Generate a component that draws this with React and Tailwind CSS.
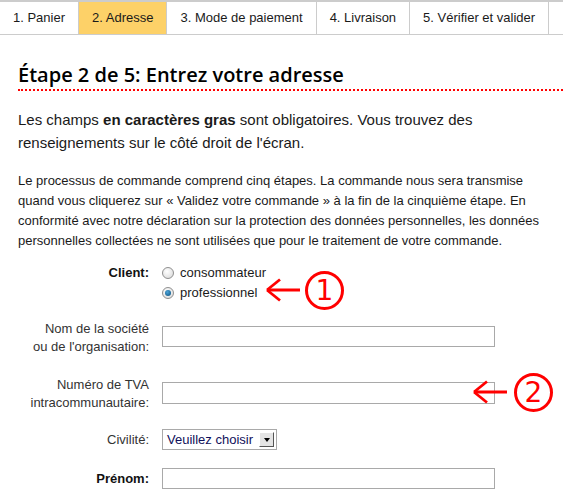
import React from "react";

const tabs = [
    { label: "1. Panier" },
    { label: "2. Adresse", active: true },
    { label: "3. Mode de paiement" },
    { label: "4. Livraison" },
    { label: "5. Vérifier et valider" },
];

const Radio = ({ checked, label }) => (
    <div className="flex items-center h-[20px]">
        <span className="w-[12px] h-[12px] rounded-full border border-[#8f8f8f] bg-[radial-gradient(circle_at_40%_35%,#ffffff,#d6d6d6)] flex items-center justify-center">
            {checked && (
                <span className="w-[6px] h-[6px] rounded-full bg-[radial-gradient(circle_at_40%_35%,#4aa3d8,#0b4f7c)]" />
            )}
        </span>
        <span className="ml-[6px]">{label}</span>
    </div>
);

const Arrow = ({ className }) => (
    <svg
        width="36"
        height="30"
        viewBox="0 0 36 30"
        className={className}
        fill="none"
        stroke="#ff0000"
        strokeWidth="2.8"
    >
        <path d="M2 15 H35" />
        <path d="M2 15 L15 4.5" />
        <path d="M2 15 L15 25.5" />
    </svg>
);

const Circled = ({ n, className }) => (
    <span
        className={
            "absolute w-[39px] h-[39px] rounded-full border-[3px] border-[#ff0000] flex items-center justify-center text-[#ff0000] text-[28px] leading-none font-['DejaVu_Sans',sans-serif] " +
            className
        }
    >
        {n}
    </span>
);

const Row = ({ label, bold, children, className = "" }) => (
    <div className={"flex gap-[13px] " + className}>
        <div
            className={
                "w-[131px] shrink-0 text-right " +
                (bold ? "font-bold text-[#111]" : "text-[#333]")
            }
        >
            {label}
        </div>
        {children}
    </div>
);

export default function App() {
    return (
        <div className="relative w-[563px] h-[495px] overflow-hidden bg-white font-['Liberation_Sans',Arial,sans-serif] text-[13px] text-[#1a1a1a]">
            <nav className="flex h-[35px] border-t-2 border-b border-[#cccccc]">
                {tabs.map((t) => (
                    <div
                        key={t.label}
                        className={
                            "flex items-center px-[13px] border-r border-[#cccccc] " +
                            (t.active ? "bg-[#fdd168]" : "")
                        }
                    >
                        {t.label}
                    </div>
                ))}
            </nav>

            <div className="px-[18px]">
                <h1 className="mt-[28px] pb-[2px] border-b-2 border-dotted border-[#ff0000] mr-[-18px] text-[20px] leading-[24px] font-semibold text-black font-['Open_Sans',sans-serif]">
                    Étape 2 de 5: Entrez votre adresse
                </h1>

                <p className="mt-[17px] text-[15px] leading-[23px]">
                    Les champs <b>en caractères gras</b> sont obligatoires.
                    Vous trouvez des renseignements sur le côté droit de
                    l'écran.
                </p>

                <p className="mt-[17px] leading-[20px]">
                    Le processus de commande comprend cinq étapes. La commande
                    nous sera transmise quand vous cliquerez sur « Validez
                    votre commande » à la fin de la cinquième étape. En
                    conformité avec notre déclaration sur la protection des
                    données personnelles, les données personnelles collectées
                    ne sont utilisées que pour le traitement de votre
                    commande.
                </p>

                <Row label="Client:" bold className="mt-[12px] leading-[20px]">
                    <div>
                        <Radio label="consommateur" />
                        <Radio label="professionnel" checked />
                    </div>
                </Row>

                <Row label={<>Nom de la société<br />ou de l'organisation:</>} className="mt-[17px] leading-[18px]">
                    <div className="mt-[6px] w-[333px] h-[21px] border border-[#a9a9a9]" />
                </Row>

                <Row label={<>Numéro de TVA<br />intracommunautaire:</>} className="mt-[20px] leading-[18px]">
                    <div className="mt-[6px] w-[333px] h-[22px] border border-[#a9a9a9]" />
                </Row>

                <Row label="Civilité:" className="mt-[17px] leading-[21px]">
                    <div className="flex items-center w-[115px] h-[21px] border border-[#a9a9a9] pl-[4px] pr-[2px]">
                        <span className="flex-1 text-[#10105a]">Veuillez choisir</span>
                        <span className="w-[15px] h-[15px] bg-[#e4e4e4] border border-t-white border-l-white border-r-[#555] border-b-[#555] flex items-center justify-center">
                            <span className="w-0 h-0 border-l-[3.5px] border-r-[3.5px] border-t-[4px] border-l-transparent border-r-transparent border-t-black" />
                        </span>
                    </div>
                </Row>

                <Row label="Prénom:" bold className="mt-[18px] leading-[21px]">
                    <div className="w-[333px] h-[21px] border border-[#a9a9a9]" />
                </Row>
            </div>

            <Arrow className="absolute left-[265px] top-[275px]" />
            <Circled n="1" className="left-[305px] top-[271px]" />
            <Arrow className="absolute left-[472px] top-[377px]" />
            <Circled n="2" className="left-[514px] top-[373px]" />
        </div>
    );
}
